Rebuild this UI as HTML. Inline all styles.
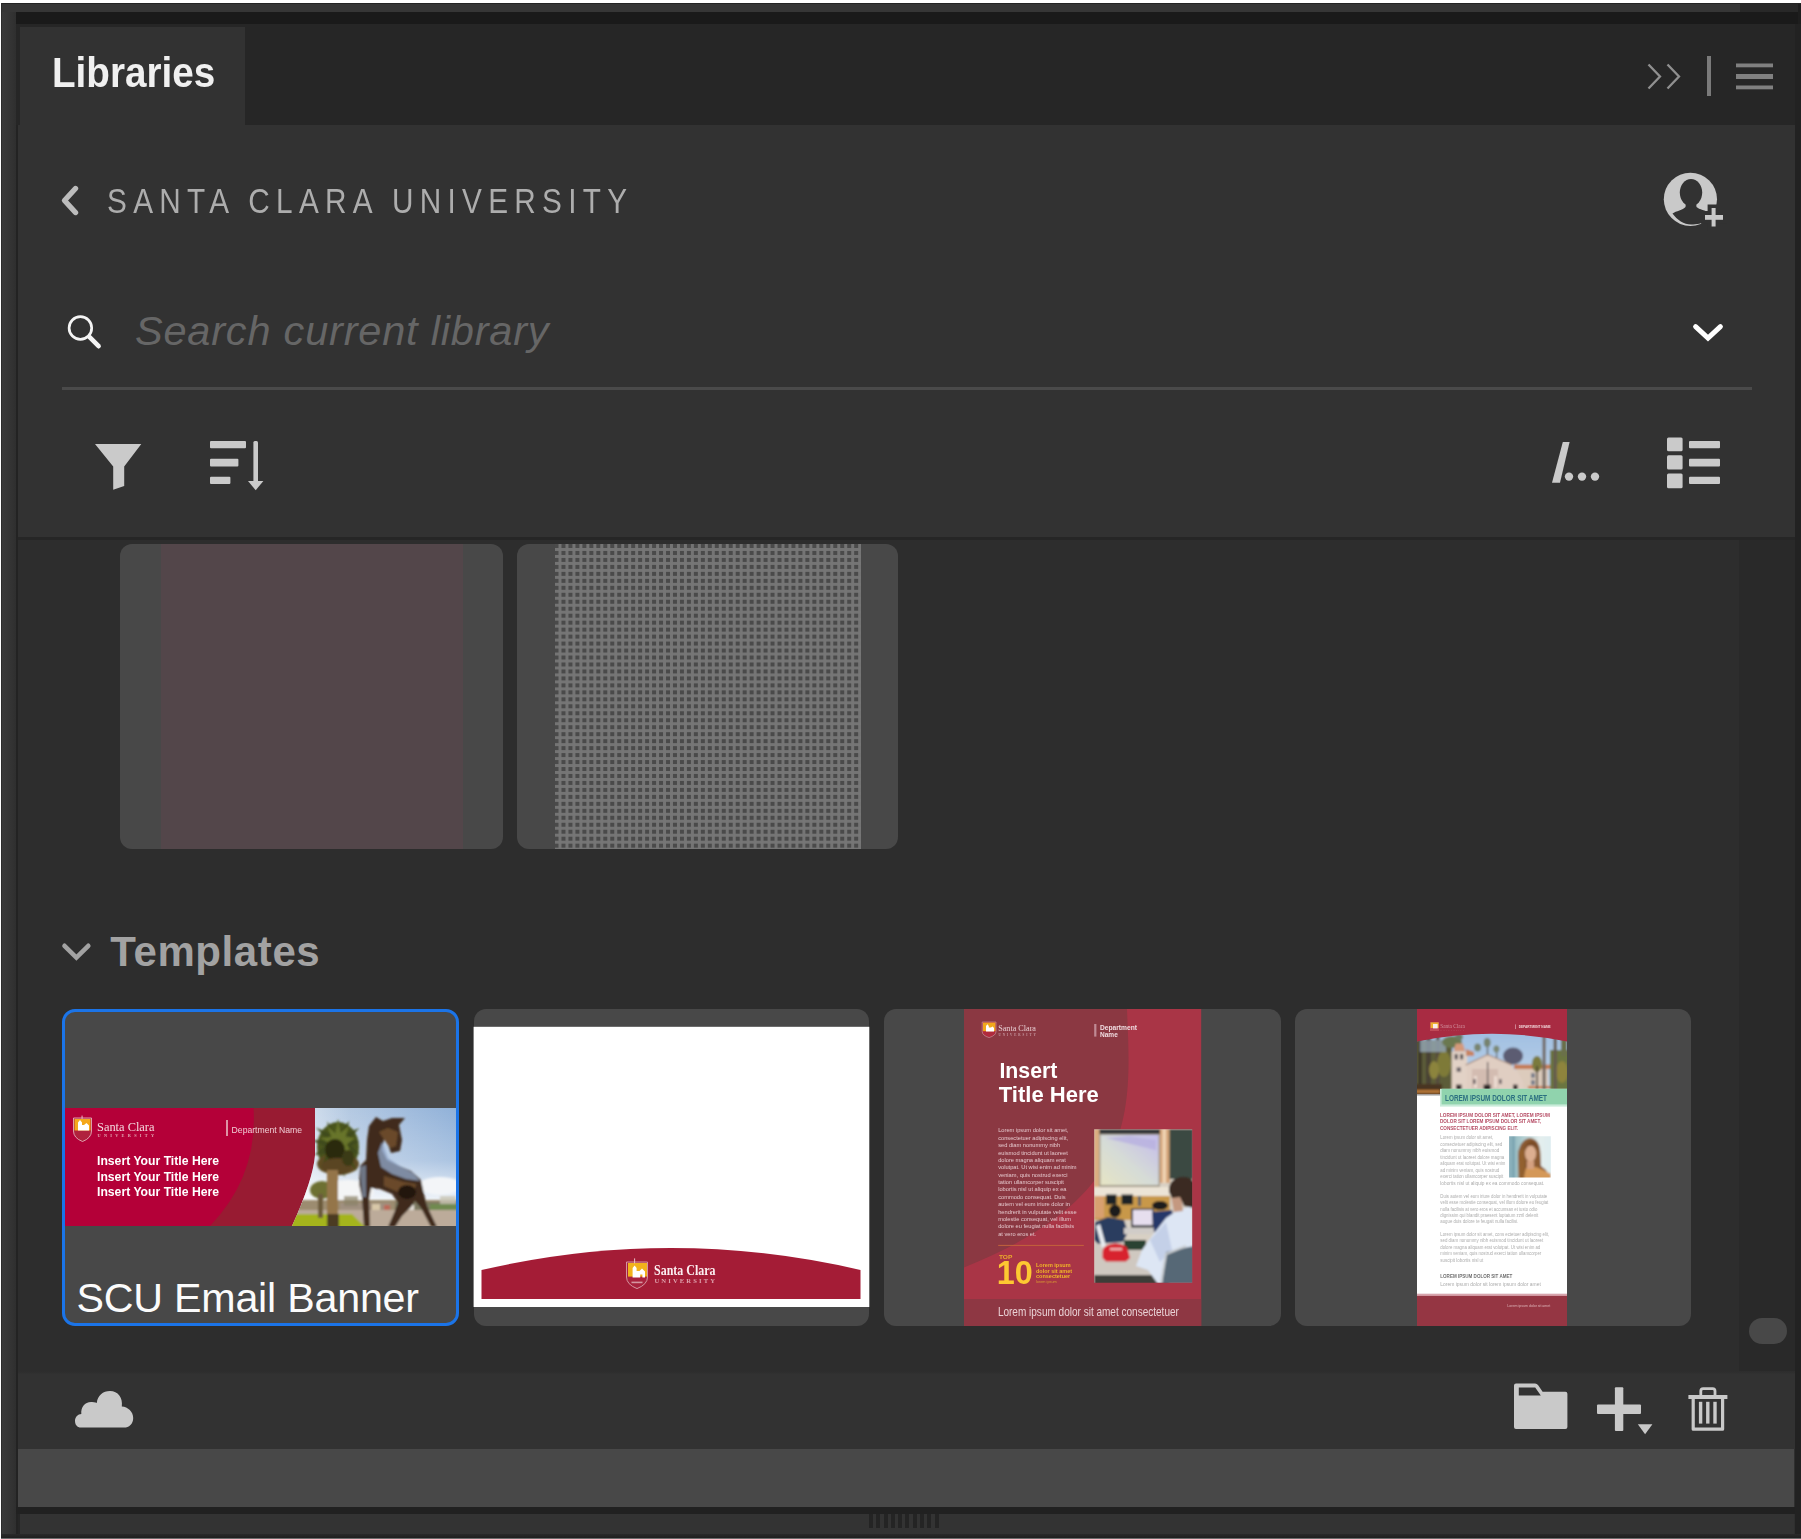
<!DOCTYPE html>
<html lang="en">
<head>
<meta charset="utf-8">
<title>Libraries</title>
<style>
html,body{margin:0;padding:0;}
body{width:1801px;height:1539px;position:relative;overflow:hidden;background:#fff;font-family:"Liberation Sans",sans-serif;}
.a{position:absolute;}
.t{position:absolute;white-space:nowrap;line-height:1;}
svg{position:absolute;overflow:visible;}
/* chrome */
#frame{left:1px;top:3px;width:1800px;height:1535px;background:linear-gradient(90deg,#3a3a3a 0,#353535 8px,#2f2f2f 15px,#2f2f2f 100%);}
#topedge{left:1px;top:3px;width:1800px;height:1px;background:#242424;}
#leftedge{left:1px;top:3px;width:1px;height:1535px;background:#2c2c2c;}
#topstrip{left:2px;top:4px;width:1738px;height:8px;background:#363636;}
#topstrip2{left:1740px;top:4px;width:61px;height:8px;background:#282828;}
#blackbar{left:16px;top:12px;width:1782px;height:12px;background:#1a1a1a;}
#tabbar{left:16px;top:24px;width:1779px;height:101px;background:#262626;}
#tab{left:20px;top:27px;width:225px;height:98px;background:#323232;}
#panel{left:18px;top:125px;width:1777px;height:412px;background:#323232;}
#sep1{left:18px;top:537px;width:1777px;height:3.3px;background:#262626;}
#content{left:18px;top:540px;width:1721px;height:831px;background:#2d2d2d;}
#track{left:1739px;top:540px;width:56px;height:831px;background:#292929;}
#thumb{left:1749px;top:1318px;width:38px;height:26px;border-radius:13px;background:#484848;}
#footer{left:18px;top:1371px;width:1777px;height:78px;background:linear-gradient(#2d2d2d 0,#2f2f2f 2px,#323232 3px,#323232 100%);}
#band{left:18px;top:1449px;width:1776px;height:58px;background:#484848;}
#dark2{left:16px;top:1507px;width:1785px;height:7px;background:#212121;}
#low{left:20px;top:1514px;width:1774px;height:20px;background:#333;}
#lowl{left:16px;top:125px;width:2px;height:1413px;background:#232323;}
#lowl2{left:18px;top:1514px;width:2px;height:20px;background:#262626;}
#bot{left:1px;top:1534px;width:1800px;height:4px;background:linear-gradient(#2a2a2a,#1f1f1f);}
#botline{left:1px;top:1538px;width:1800px;height:1px;background:#6c6c6c;}
#rstrip{left:1795px;top:24px;width:6px;height:1514px;background:#222;}
#rstrip2{left:1798px;top:4px;width:3px;height:20px;background:#1e1e1e;}
#grip{left:869px;top:1514px;width:70.5px;height:14px;background:repeating-linear-gradient(90deg,#242424 0,#242424 4px,transparent 4px,transparent 7.28px);}

.card{position:absolute;background:#484848;border-radius:12px;overflow:hidden;}
#cA{left:120px;top:544px;width:383px;height:305px;}
#cA i{position:absolute;left:41px;top:0;width:302px;height:305px;background:#53464a;}
#cB{left:517px;top:544px;width:381px;height:305px;}
#cB i{position:absolute;left:38px;top:0;width:306px;height:305px;background-color:#4a4a4a;
 background-image:linear-gradient(90deg,rgba(118,118,118,.95) 0,rgba(118,118,118,.95) 2.6px,transparent 2.6px),linear-gradient(180deg,rgba(118,118,118,.95) 0,rgba(118,118,118,.95) 2.6px,transparent 2.6px);
 background-size:6.97px 6.97px;background-position:3.5px 4px;}
#c1{left:62px;top:1009px;width:391px;height:311px;border:3px solid #1b74e8;border-radius:13px;}
#c2{left:474px;top:1009px;width:395px;height:317px;}
#c3{left:884px;top:1009px;width:397px;height:317px;}
#c4{left:1295px;top:1009px;width:396px;height:317px;}
</style>
</head>
<body>
<div class="a" id="frame"></div>
<div class="a" id="topstrip"></div>
<div class="a" id="topstrip2"></div>
<div class="a" id="topedge"></div>
<div class="a" id="leftedge"></div>
<div class="a" id="rstrip2"></div>
<div class="a" id="blackbar"></div>
<div class="a" id="tabbar"></div>
<div class="a" id="tab"></div>
<div class="a" id="panel"></div>
<div class="a" id="sep1"></div>
<div class="a" id="content"></div>
<div class="a" id="track"></div>
<div class="a" id="thumb"></div>
<div class="a" id="footer"></div>
<div class="a" id="band"></div>
<div class="a" id="lowl"></div>
<div class="a" id="dark2"></div>
<div class="a" id="low"></div>
<div class="a" id="lowl2"></div>
<div class="a" id="rstrip"></div>
<div class="a" id="bot"></div>
<div class="a" id="botline"></div>
<div class="a" id="grip"></div>

<!-- TEXT -->
<div class="t" id="tLib" style="left:52px;top:52px;font-size:42px;font-weight:bold;color:#f0f0f0;transform-origin:0 0;transform:scaleX(.92);">Libraries</div>
<div class="t" id="tScu" style="left:106.5px;top:183px;font-size:35px;color:#adadad;letter-spacing:7.4px;transform-origin:0 0;transform:scaleX(.85);">SANTA CLARA UNIVERSITY</div>
<div class="t" id="tSearch" style="left:135px;top:310px;font-size:41.5px;font-style:italic;color:#666666;letter-spacing:.8px;">Search current library</div>
<div class="t" id="tTpl" style="left:110.3px;top:931.3px;font-size:42px;font-weight:bold;color:#a2a2a2;letter-spacing:.6px;">Templates</div>

<svg id="icons" width="1801" height="1539" viewBox="0 0 1801 1539" style="left:0;top:0;">
<!-- collapse chevrons + divider + hamburger -->
<g fill="none" stroke="#909090" stroke-width="2.3" stroke-linejoin="miter">
<polyline points="1648.5,64.5 1660,76.5 1648.5,88.5"/>
<polyline points="1667.5,64.5 1679,76.5 1667.5,88.5"/>
</g>
<rect x="1707" y="56" width="4" height="40" fill="#7a7a7a"/>
<g fill="#808080">
<rect x="1736" y="63.5" width="37" height="3.8"/>
<rect x="1736" y="74" width="37" height="5"/>
<rect x="1736" y="85.5" width="37" height="3.8"/>
</g>
<!-- back chevron -->
<polyline points="75.5,188.5 64.5,200.5 75.5,212.5" fill="none" stroke="#bcbcbc" stroke-width="5.4" stroke-linecap="round" stroke-linejoin="round"/>
<!-- invite user -->
<g>
<circle cx="1690.4" cy="199.3" r="26.6" fill="#c9c9c9"/>
<ellipse cx="1691" cy="192.6" rx="11.2" ry="13.6" fill="#323232"/>
<path d="M1686 202 L1696 202 L1696.5 207 C1699 209.5 1706 210.5 1709 212.5 L1707 219 C1702 224 1697 224.5 1691 224.5 C1684 224.5 1677 220 1672.5 213.5 C1676 211 1683 210 1685.5 207 Z" fill="#323232"/>
<path d="M1707.6 204.4 L1719.2 204.4 L1719.2 211 L1727 211 L1727 223.8 L1719.2 223.8 L1719.2 231 L1707.6 231 L1707.6 223.8 L1701 223.8 L1701 211 L1707.6 211 Z" fill="#323232"/>
<rect x="1705" y="215" width="18" height="4.8" fill="#c9c9c9"/>
<rect x="1711.6" y="208" width="4" height="18.5" fill="#c9c9c9"/>
</g>
<!-- search icon -->
<g fill="none" stroke="#f4f4f4">
<circle cx="80.4" cy="328" r="11.3" stroke-width="2.7"/>
<line x1="89.6" y1="337.2" x2="98.6" y2="346.2" stroke-width="4.6" stroke-linecap="round"/>
</g>
<!-- dropdown chevron -->
<polyline points="1695.6,326.6 1708,338 1720.4,326.6" fill="none" stroke="#ffffff" stroke-width="5" stroke-linecap="round" stroke-linejoin="miter"/>
<rect x="62" y="387" width="1690" height="3" fill="#4a4a4a"/>
<!-- filter funnel -->
<path d="M95 444 L141.3 444 L124.2 466.5 L124.2 486 L113.2 489.8 L113.2 466.5 Z" fill="#cacaca"/>
<!-- sort -->
<g fill="#cacaca">
<rect x="210" y="441" width="36" height="7.2" rx="1"/>
<rect x="210" y="458.8" width="28.4" height="7.8" rx="1"/>
<rect x="210" y="476.8" width="20.4" height="7.2" rx="1"/>
<rect x="253.4" y="441" width="4.6" height="42" rx="1.5"/>
<path d="M248 481 L263.4 481 L255.7 490.2 Z"/>
</g>
<!-- path breadcrumb /... -->
<g fill="#cacaca">
<path d="M1552 482.8 L1560 482.8 L1569.6 442 L1562.8 442 Z"/>
<circle cx="1569" cy="476.6" r="4.2"/>
<circle cx="1582" cy="476.6" r="4.2"/>
<circle cx="1595" cy="476.6" r="4.2"/>
</g>
<!-- list view -->
<g fill="#cacaca">
<rect x="1667" y="437.4" width="15.6" height="13.8" rx="1.5"/>
<rect x="1667" y="455.2" width="15.6" height="14.4" rx="1.5"/>
<rect x="1667" y="473.6" width="15.6" height="14.6" rx="1.5"/>
<rect x="1689" y="441" width="31" height="7.2" rx="1"/>
<rect x="1689" y="458.8" width="31" height="7.8" rx="1"/>
<rect x="1689" y="476.8" width="31" height="7.2" rx="1"/>
</g>
<!-- section chevron -->
<polyline points="64.5,945.8 76.4,957.6 88.3,945.8" fill="none" stroke="#a2a2a2" stroke-width="4.6" stroke-linecap="round" stroke-linejoin="miter"/>
<!-- cloud -->
<path d="M81 1427.6 C77 1427.6 75 1424.5 75 1421 C75 1417 78 1414.2 81.3 1414 C80.8 1407 85 1401.5 92 1402 C95 1402 96.5 1402.8 96.8 1403 C97.5 1395.5 103 1391 110 1391 C118 1391 123 1397.5 121.8 1406.5 C128 1407 133.2 1411.5 133.2 1418 C133.2 1424 129 1427.6 124 1427.6 Z" fill="#c9c9c9"/>
<!-- folder -->
<path d="M1514 1385.5 Q1514 1383.5 1516 1383.5 L1535 1383.5 Q1537 1383.5 1538.2 1385.2 L1542.6 1391.7 L1565.4 1391.7 Q1567.4 1391.7 1567.4 1393.7 L1567.4 1427 Q1567.4 1429 1565.4 1429 L1516 1429 Q1514 1429 1514 1427 Z M1518.8 1387.4 L1518.8 1395.4 L1540.8 1395.4 L1535.2 1387.4 Z" fill="#c9c9c9" fill-rule="evenodd"/>
<!-- plus -->
<g fill="#c9c9c9">
<rect x="1597" y="1404.6" width="44" height="9.4" rx="1"/>
<rect x="1614.9" y="1387.3" width="8.4" height="43.8" rx="1"/>
<path d="M1637.8 1424.2 L1652.4 1424.2 L1645.1 1434.2 Z"/>
</g>
<!-- trash -->
<g fill="none" stroke="#c9c9c9">
<path d="M1700.8 1395.5 L1700.8 1391 Q1700.8 1388.6 1703.2 1388.6 L1712.6 1388.6 Q1715 1388.6 1715 1391 L1715 1395.5" stroke-width="2.8"/>
<line x1="1688.4" y1="1397" x2="1727.4" y2="1397" stroke-width="4"/>
<path d="M1693.2 1399 L1693.2 1429.2 L1722.6 1429.2 L1722.6 1399" stroke-width="3.2" stroke-linejoin="round"/>
<line x1="1700.6" y1="1401.8" x2="1700.6" y2="1423.6" stroke-width="3.4"/>
<line x1="1707.8" y1="1401.8" x2="1707.8" y2="1423.6" stroke-width="3.4"/>
<line x1="1715" y1="1401.8" x2="1715" y2="1423.6" stroke-width="3.4"/>
</g>
</svg>
<!--ICONS-->
<div class="card" id="cA"><i></i></div>
<div class="card" id="cB"><i></i></div>
<div class="card" id="c1"></div>
<div class="card" id="c2"></div>
<div class="card" id="c3"></div>
<div class="card" id="c4"></div>
<svg id="s1" width="1801" height="1539" viewBox="0 0 1801 1539" style="left:0;top:0;">
<defs>
<clipPath id="cpBanner"><rect x="65" y="1108" width="391" height="118"/></clipPath>
<clipPath id="cpPhoto1"><path d="M315 1108 L456 1108 L456 1226 L292 1226 Q313 1180 315 1155 Z"/></clipPath>
<linearGradient id="sky1" x1="0" y1="0" x2="1" y2="0"><stop offset="0" stop-color="#dfe8f2"/><stop offset=".35" stop-color="#b4c9e2"/><stop offset="1" stop-color="#8fb0d8"/></linearGradient>
<linearGradient id="haze1" x1="0" y1="0" x2="0" y2="1"><stop offset="0" stop-color="#fff" stop-opacity="0"/><stop offset=".55" stop-color="#fff" stop-opacity=".25"/><stop offset="1" stop-color="#fff" stop-opacity=".9"/></linearGradient>
<filter id="b1" x="-10%" y="-10%" width="120%" height="120%"><feGaussianBlur stdDeviation="1.1"/></filter>
<filter id="b05" x="-10%" y="-10%" width="120%" height="120%"><feGaussianBlur stdDeviation="0.55"/></filter>
</defs>
<g clip-path="url(#cpBanner)">
<rect x="65" y="1108" width="391" height="118" fill="#b40038"/>
<path d="M253.5 1108 Q258 1176 210 1226 L330 1226 L330 1108 Z" fill="#981b32"/>
<g clip-path="url(#cpPhoto1)">
<rect x="290" y="1108" width="170" height="118" fill="url(#sky1)"/>
<rect x="290" y="1108" width="170" height="96" fill="url(#haze1)"/>
<g filter="url(#b1)">
<ellipse cx="440" cy="1186" rx="22" ry="9" fill="#f3f5f8"/>
<ellipse cx="348" cy="1192" rx="26" ry="12" fill="#f4f5f6"/>
<rect x="290" y="1200" width="170" height="10" fill="#9c8c70"/>
<rect x="395" y="1202" width="62" height="9" fill="#7d7a62"/>
<rect x="430" y="1204" width="28" height="7" fill="#6f8a50"/>
<rect x="340" y="1203" width="50" height="8" fill="#a09080"/>
<rect x="290" y="1210" width="170" height="18" fill="#bcab9a"/>
<rect x="372" y="1204" width="8" height="6" fill="#d8c8a8"/>
<rect x="384" y="1205" width="6" height="5" fill="#c85848" opacity=".7"/>
<rect x="404" y="1205" width="10" height="5" fill="#e4e0d8"/>
<rect x="440" y="1196" width="16" height="8" fill="#c8c4b4" opacity=".8"/>
<rect x="344" y="1196" width="14" height="10" fill="#8a8268" opacity=".7"/>
<path d="M290 1214 L352 1214 L366 1228 L290 1228 Z" fill="#a4b41c"/>
<!-- small palm behind -->
<ellipse cx="322" cy="1190" rx="12" ry="9" fill="#6d7030"/>
<rect x="318" y="1194" width="5" height="24" fill="#6b5a3a"/>
<!-- main palm -->
<ellipse cx="338" cy="1147" rx="21" ry="25" fill="#4a541c"/>
<ellipse cx="338" cy="1164" rx="21" ry="11" fill="#5e4c22"/>
<polygon points="338.0,1119.1 341.0,1130.7 349.2,1121.0 346.5,1133.6 359.4,1128.1 348.2,1139.8 359.2,1141.2 351.7,1146.1 359.7,1154.2 347.5,1152.1 357.0,1170.7 343.8,1157.6 344.6,1177.2 338.0,1159.4 331.8,1175.4 332.8,1156.3 320.8,1168.2 326.6,1153.8 314.5,1155.1 324.7,1146.0 311.9,1140.6 327.8,1139.8 315.8,1127.5 329.5,1133.6 327.1,1121.5 335.4,1132.7" fill="#414c1a"/>
<polygon points="338.0,1119.8 340.7,1132.7 349.0,1125.7 345.7,1136.4 354.8,1138.3 346.9,1144.2 351.4,1153.1 343.6,1151.6 343.4,1163.3 338.0,1155.0 331.9,1166.1 333.5,1149.7 325.7,1152.2 330.8,1143.8 320.0,1138.0 331.2,1137.1 327.3,1126.1 335.4,1133.2" fill="#68742a"/>
<ellipse cx="335" cy="1150" rx="10" ry="11" fill="#2a2a10"/>
<ellipse cx="337" cy="1166" rx="15" ry="8" fill="#5a4420"/>
<ellipse cx="348" cy="1158" rx="6" ry="8" fill="#3a3a14"/>
<rect x="327" y="1170" width="11" height="58" fill="#94744a"/>
<rect x="327" y="1214" width="12" height="14" fill="#4b3a24"/>
<!-- horse -->
<path d="M376 1117 L383 1121 L392 1118 L405 1118 L399 1125 L402 1140 L400 1151 L391 1153 L388 1144 L384 1139 L382 1150 L387 1160 L399 1166 L411 1171 L421 1180 L424 1194 L427 1206 L437 1227 L431 1227 L421 1208 L415 1201 L411 1207 L402 1216 L395 1227 L388 1227 L394 1213 L398 1203 L392 1194 L380 1189 L371 1188 L369 1200 L370 1227 L364 1227 L362 1198 L359 1184 L360 1166 L366 1160 L367 1140 L369 1126 Z" fill="#3f2c1d"/>
<path d="M379 1132 L388 1128 L398 1132 L396 1146 L390 1148 Z" fill="#6b4a2c"/>
<path d="M382 1142 L388 1158 L400 1166 L413 1173 L420 1181 L406 1179 L392 1174 L381 1167 L378 1153 Z" fill="#8ea4c4" opacity=".8"/>
<path d="M384 1176 L404 1182 L416 1184 L414 1194 L398 1192 L384 1186 Z" fill="#6a4a2a"/>
<ellipse cx="407" cy="1192" rx="9" ry="7" fill="#20140e"/>
<path d="M360 1167 L366 1165 L366 1197 L362 1197 Z" fill="#7f8fa8" opacity=".75"/>
</g>
</g>
<!-- shield logo -->
<g filter="url(#b05)">
<path d="M73.5 1118 L91.5 1118 L91.5 1131 Q91.5 1138 82.5 1141.5 Q73.5 1138 73.5 1131 Z" fill="#b0203c" stroke="#e7c4c8" stroke-width=".8"/>
<path d="M74.5 1119 L90.5 1119 L90.5 1130.5 L74.5 1130.5 Z" fill="#f4a81c"/>
<path d="M78 1130.5 L78 1122.5 L80 1120 L82 1122.5 L82 1125 L84 1125 L86.5 1123 L89 1125.5 L89 1130.5 Z" fill="#fff"/>
<rect x="81.6" y="1115.6" width=".9" height="3.2" fill="#f0d0d4"/>
</g>
</g>
<g font-family="'Liberation Serif',serif" fill="#f4dfe3" filter="url(#b05)">
<text x="97" y="1131" font-size="12.4" textLength="57.5" lengthAdjust="spacingAndGlyphs" fill="#f3d8dd">Santa Clara</text>
<text x="97.5" y="1136.8" font-size="4.3" textLength="56.5" lengthAdjust="spacing" fill="#e3a9b4" font-weight="bold">UNIVERSITY</text>
</g>
<rect x="226.2" y="1120" width="1.6" height="16" fill="#e9b7c0"/>
<g font-family="'Liberation Sans',sans-serif" filter="url(#b05)">
<text x="231.6" y="1132.6" font-size="9.4" textLength="70.5" lengthAdjust="spacingAndGlyphs" fill="#f0cdd4">Department Name</text>
<g font-weight="bold" font-size="13" fill="#fff">
<text x="97" y="1165.2" textLength="122" lengthAdjust="spacingAndGlyphs">Insert Your Title Here</text>
<text x="97" y="1180.6" textLength="122" lengthAdjust="spacingAndGlyphs">Insert Your Title Here</text>
<text x="97" y="1196" textLength="122" lengthAdjust="spacingAndGlyphs">Insert Your Title Here</text>
</g>
</g>
</svg>
<div class="t" id="tBan" style="left:76.4px;top:1277.6px;font-size:41.2px;color:#fbfbfb;letter-spacing:-.2px;">SCU Email Banner</div>

<svg id="s2" width="1801" height="1539" viewBox="0 0 1801 1539" style="left:0;top:0;">
<rect x="473.6" y="1026.8" width="395.7" height="280.2" fill="#ffffff"/>
<path d="M481.5 1299 L481.5 1270 Q671 1226 860.5 1270 L860.5 1299 Z" fill="#a41c36"/>
<g filter="url(#b05)">
<path d="M626.5 1262 L647.5 1262 L647.5 1277 Q647.5 1284.5 637 1288.6 Q626.5 1284.5 626.5 1277 Z" fill="#a8243c" stroke="#d9a0aa" stroke-width=".9"/>
<rect x="628" y="1263" width="19" height="13.6" fill="#f2b21c"/>
<path d="M632.6 1277.6 L632.6 1268 L634.6 1265.4 L636.6 1268 L636.6 1271 L639.5 1271 L642 1268.6 L645 1271.4 L645 1277.6 L642.4 1277.6 L642.4 1274.5 L640.2 1274.5 L640.2 1277.6 Z" fill="#fff"/>
<rect x="634.1" y="1258.4" width="1" height="5" fill="#e8c0c6"/>
<rect x="631.5" y="1281.6" width="11" height="1.6" fill="#d595a1"/>
</g>
<g font-family="'Liberation Serif',serif" filter="url(#b05)">
<text x="654" y="1274.8" font-size="14.2" font-weight="bold" textLength="61.5" lengthAdjust="spacingAndGlyphs" fill="#fbeef0">Santa Clara</text>
<text x="654.4" y="1282.9" font-size="6.6" font-weight="bold" textLength="60.6" lengthAdjust="spacing" fill="#dfa2ad">UNIVERSITY</text>
</g>
</svg>

<svg id="s3" width="1801" height="1539" viewBox="0 0 1801 1539" style="left:0;top:0;">
<defs>
<clipPath id="cpP3"><rect x="964" y="1009" width="237.2" height="317"/></clipPath>
<clipPath id="cpPh3"><rect x="1094.2" y="1129.2" width="98" height="153.6"/></clipPath>
<linearGradient id="scr3" x1="0" y1="1" x2="1" y2="0"><stop offset="0" stop-color="#e6e4c4"/><stop offset=".45" stop-color="#d6dcd6"/><stop offset="1" stop-color="#c4bcec"/></linearGradient>
</defs>
<g clip-path="url(#cpP3)">
<rect x="964" y="1009" width="238" height="317" fill="#a93546"/>
<path d="M964 1009 L1127 1009 C1131 1110 1140 1197 964 1267.4 Z" fill="#8b3842"/>
<rect x="964" y="1299" width="238" height="27" fill="#8e3743"/>
</g>
<!-- photo -->
<g clip-path="url(#cpPh3)"><g filter="url(#b1)">
<rect x="1090" y="1125" width="106" height="162" fill="#d8d0c4"/>
<rect x="1094" y="1129" width="66" height="6" fill="#34383a"/>
<rect x="1094" y="1129" width="5.4" height="60" fill="#dcae80"/>
<rect x="1099" y="1134" width="61" height="53" fill="#a49c8c"/>
<rect x="1100.5" y="1135" width="58" height="50" fill="url(#scr3)"/>
<path d="M1106 1138 L1156 1150 L1156 1140 L1130 1136 Z" fill="#b8b0e0" opacity=".8"/>
<rect x="1160" y="1129" width="10" height="54" fill="#d4a478"/>
<rect x="1162.5" y="1129" width="3.5" height="54" fill="#f0d4b4"/>
<rect x="1169.5" y="1129" width="24" height="50" fill="#3a4a42"/>
<rect x="1094" y="1187" width="76" height="9" fill="#ece4d6"/>
<rect x="1094" y="1196" width="76" height="24" fill="#c8984a"/>
<rect x="1106" y="1194.5" width="10.5" height="10" fill="#1e2428"/>
<rect x="1121.5" y="1194.5" width="11.5" height="10" fill="#1e2428"/>
<rect x="1138" y="1196" width="3" height="10" fill="#5a6068"/>
<rect x="1094" y="1196" width="10" height="22" fill="#d8a070"/>
<!-- center person -->
<ellipse cx="1115" cy="1211" rx="6" ry="6.5" fill="#1c1a1c"/>
<path d="M1095 1222 L1108 1217 L1124 1220 L1128 1232 L1122 1244 L1100 1246 L1094 1240 Z" fill="#2b3c5e"/>
<!-- laptop -->
<rect x="1131" y="1208.5" width="23" height="19" fill="#3a3c44"/>
<rect x="1133" y="1210" width="19.5" height="15" fill="#e6deee"/>
<rect x="1124" y="1228" width="34" height="6" fill="#d0ccc8"/>
<!-- 2nd person -->
<ellipse cx="1160" cy="1205.5" rx="8" ry="4.5" fill="#1e1a1a"/>
<path d="M1152 1212 L1172 1210 L1176 1230 L1154 1232 Z" fill="#26386a"/>
<!-- table -->
<path d="M1094 1244 L1150 1240 L1165 1252 L1165 1276 L1094 1276 Z" fill="#cfc8c0"/>
<rect x="1094" y="1275" width="75" height="10" fill="#3c3c38"/>
<rect x="1124" y="1240" width="22" height="10" fill="#2a4232"/>
<path d="M1096 1226 L1100 1224 L1106 1246 L1102 1248 Z" fill="#e8ecf0"/>
<!-- red cap -->
<path d="M1102.5 1252 Q1103 1244 1116 1243.5 Q1128 1244 1128.5 1252 L1130 1258 L1126 1261.5 L1106 1261.5 L1102.5 1258 Z" fill="#d8202e"/>
<rect x="1110" y="1248" width="12" height="2.4" fill="#f0b0b0"/>
<!-- foreground person -->
<path d="M1192 1206 L1178 1210 L1166 1218 L1152 1236 L1142 1250 L1136 1266 L1148 1270 L1158 1284 L1194 1284 Z" fill="#dde6f4"/>
<path d="M1150 1240 L1166 1222 L1172 1250 L1160 1262 Z" fill="#c4d0e8"/>
<path d="M1171 1196 L1181 1196 L1183 1211 L1174 1212 Z" fill="#c49880"/>
<path d="M1169 1192 Q1168 1180 1180 1177 Q1190 1176 1194 1182 L1194 1208 L1184 1206 L1180 1197 L1172 1198 Z" fill="#3a2a22"/>
<!-- chair -->
<path d="M1166 1252 L1194 1246 L1194 1284 L1162 1284 Z" fill="#566876"/>
<path d="M1161 1284 L1166 1254 L1186 1246" fill="none" stroke="#c8ccd0" stroke-width="2.2"/>
</g></g>
<!-- logo -->
<g filter="url(#b05)">
<path d="M982.2 1022 L996 1022 L996 1031.5 Q996 1035.5 989.1 1037.6 Q982.2 1035.5 982.2 1031.5 Z" fill="#b02a3e" stroke="#caa0a4" stroke-width=".6"/>
<rect x="983" y="1022.6" width="12.4" height="8.6" fill="#f0a81c"/>
<path d="M986 1031.4 L986 1026 L987.4 1024.2 L988.8 1026 L988.8 1027.6 L991 1027.6 L992.6 1026.4 L994 1028 L994 1031.4 Z" fill="#fff"/>
<text x="998.2" y="1031.3" font-family="'Liberation Serif',serif" font-size="8.7" textLength="37.8" lengthAdjust="spacingAndGlyphs" fill="#e6ccd0">Santa Clara</text>
<text x="998.4" y="1035.5" font-family="'Liberation Serif',serif" font-size="3.2" font-weight="bold" textLength="37.4" lengthAdjust="spacing" fill="#c89aa2">UNIVERSITY</text>
<rect x="1094.2" y="1024" width="2.2" height="12.6" fill="#c08a94"/>
<g font-family="'Liberation Sans',sans-serif" font-weight="bold" font-size="6.4" fill="#f0dce0">
<text x="1100" y="1029.8" textLength="37" lengthAdjust="spacingAndGlyphs">Department</text>
<text x="1100" y="1037" textLength="17.8" lengthAdjust="spacingAndGlyphs">Name</text>
</g>
</g>
<g font-family="'Liberation Sans',sans-serif" font-weight="bold" font-size="22.4" fill="#ffffff" filter="url(#b05)">
<text x="999.4" y="1077.5" textLength="58" lengthAdjust="spacingAndGlyphs">Insert</text>
<text x="998.8" y="1101.8" textLength="100" lengthAdjust="spacingAndGlyphs">Title Here</text>
</g>
<g font-family="'Liberation Sans',sans-serif" font-size="5.7" fill="#e3c5ca" filter="url(#b05)">
<text x="998.2" y="1132.40">Lorem ipsum dolor sit amet,</text>
<text x="998.2" y="1139.79">consectetuer adipiscing elit,</text>
<text x="998.2" y="1147.17">sed diam nonummy nibh</text>
<text x="998.2" y="1154.56">euismod tincidunt ut laoreet</text>
<text x="998.2" y="1161.94">dolore magna aliquam erat</text>
<text x="998.2" y="1169.33">volutpat. Ut wisi enim ad minim</text>
<text x="998.2" y="1176.71">veniam, quis nostrud exerci</text>
<text x="998.2" y="1184.10">tation ullamcorper suscipit</text>
<text x="998.2" y="1191.48">lobortis nisl ut aliquip ex ea</text>
<text x="998.2" y="1198.87">commodo consequat. Duis</text>
<text x="998.2" y="1206.25">autem vel eum iriure dolor in</text>
<text x="998.2" y="1213.63">hendrerit in vulputate velit esse</text>
<text x="998.2" y="1221.02">molestie consequat, vel illum</text>
<text x="998.2" y="1228.41">dolore eu feugiat nulla facilisis</text>
<text x="998.2" y="1235.79">at vero eros et.</text>
</g>
<rect x="998.2" y="1244.9" width="85.6" height=".9" fill="#c7683a"/>
<g font-family="'Liberation Sans',sans-serif" font-weight="bold" filter="url(#b05)">
<text x="998.9" y="1258.6" font-size="5.8" textLength="13.4" lengthAdjust="spacingAndGlyphs" fill="#eaa82c">TOP</text>
<text x="996.8" y="1284.2" font-size="33.9" textLength="36" lengthAdjust="spacingAndGlyphs" fill="#fdc830">10</text>
<g font-size="5.5" fill="#f0b428">
<text x="1036" y="1267">Lorem ipsum</text>
<text x="1036" y="1272.9">dolor sit amet</text>
<text x="1036" y="1278.4">consectetuer</text>
<text x="1036" y="1283.2" font-size="3.8" font-weight="normal" fill="#d89a30">lorem ipsum</text>
</g>
</g>
<text x="997.9" y="1316.2" font-family="'Liberation Sans',sans-serif" font-size="12.8" textLength="181" lengthAdjust="spacingAndGlyphs" fill="#ead2d6" filter="url(#b05)">Lorem ipsum dolor sit amet consectetuer</text>
</svg>

<svg id="s4" width="1801" height="1539" viewBox="0 0 1801 1539" style="left:0;top:0;">
<defs>
<clipPath id="cpP4"><rect x="1416.9" y="1009" width="150.2" height="317"/></clipPath>
<clipPath id="cpPh4"><path d="M1416.9 1041.5 Q1492 1026 1567.1 1041.5 L1567.1 1094.4 L1416.9 1094.4 Z"/></clipPath>
<clipPath id="cpPt4"><rect x="1509.1" y="1136.3" width="41.7" height="41.3"/></clipPath>
<linearGradient id="sky4" x1="0" y1="0" x2="0" y2="1"><stop offset="0" stop-color="#9cbce0"/><stop offset="1" stop-color="#c4d8ec"/></linearGradient>
<linearGradient id="pbg4" x1="0" y1="0" x2="1" y2="0"><stop offset="0" stop-color="#7fa8b4"/><stop offset=".3" stop-color="#a8c8cc"/><stop offset=".7" stop-color="#e4eeee"/><stop offset="1" stop-color="#dcecf0"/></linearGradient>
<filter id="b08" x="-10%" y="-10%" width="120%" height="120%"><feGaussianBlur stdDeviation="0.8"/></filter>
<filter id="b03" x="-10%" y="-10%" width="120%" height="120%"><feGaussianBlur stdDeviation="0.35"/></filter>
</defs>
<g clip-path="url(#cpP4)">
<rect x="1416" y="1009" width="152" height="317" fill="#ffffff"/>
<rect x="1416" y="1009" width="152" height="36" fill="#a82b42"/>
<rect x="1416" y="1293.9" width="152" height="33" fill="#953643"/>
<rect x="1416" y="1293.9" width="152" height="2" fill="#d8a4ac"/>
<!-- campus photo -->
<g clip-path="url(#cpPh4)"><g filter="url(#b08)">
<rect x="1412" y="1025" width="160" height="72" fill="url(#sky4)"/>
<!-- left trees -->
<rect x="1412" y="1040" width="40" height="56" fill="#5c5c38"/>
<rect x="1418" y="1038" width="4" height="56" fill="#3e382c"/>
<rect x="1426" y="1036" width="5" height="58" fill="#4a4234"/>
<rect x="1436" y="1036" width="3.5" height="58" fill="#564c3c"/>
<ellipse cx="1444" cy="1064" rx="7" ry="13" fill="#7e7a38"/>
<ellipse cx="1434" cy="1070" rx="5" ry="9" fill="#8c843c"/>
<rect x="1420" y="1040" width="26" height="12" fill="#9cb4c8" opacity=".7"/>
<ellipse cx="1452" cy="1042" rx="10" ry="6" fill="#6a7850"/>
<rect x="1412" y="1084" width="30" height="12" fill="#4a3420"/>
<rect x="1412" y="1090" width="28" height="3" fill="#b87838"/>
<!-- right building + trees -->
<rect x="1516" y="1068" width="32" height="22" fill="#dccbbc"/>
<rect x="1514" y="1064.6" width="36" height="4.4" fill="#c47c54"/>
<rect x="1528" y="1086" width="24" height="2.6" fill="#c47c54"/>
<rect x="1531" y="1073" width="4" height="5" fill="#7a808c"/>
<rect x="1531" y="1080" width="4" height="5" fill="#7a808c"/>
<ellipse cx="1513" cy="1056" rx="10" ry="8.5" fill="#5c5c72"/>
<ellipse cx="1537" cy="1064" rx="5" ry="8" fill="#7a7a3c"/>
<rect x="1536.4" y="1066" width="1.6" height="26" fill="#4a4030"/>
<rect x="1550" y="1050" width="20" height="46" fill="#6a7440"/>
<ellipse cx="1562" cy="1072" rx="6" ry="11" fill="#8e843e"/>
<rect x="1542.6" y="1030" width="3" height="64" fill="#6e645c"/>
<rect x="1553.6" y="1030" width="3.2" height="64" fill="#645a50"/>
<rect x="1561" y="1034" width="6" height="22" fill="#6a7048"/>
<!-- small palms above church -->
<rect x="1486.8" y="1040" width="1.4" height="16" fill="#5a5a54"/>
<rect x="1496" y="1046" width="1.2" height="12" fill="#5a5a54"/>
<ellipse cx="1477.6" cy="1047.6" rx="3.4" ry="4" fill="#788470"/>
<ellipse cx="1487.2" cy="1042.6" rx="3.4" ry="4.6" fill="#76826e"/>
<ellipse cx="1496.4" cy="1049" rx="3" ry="3.6" fill="#7c8874"/>
<ellipse cx="1459" cy="1037" rx="4" ry="3" fill="#6a7a60"/>
<!-- tower -->
<path d="M1453.6 1051.6 L1455.6 1043.4 L1463 1043.4 L1465.4 1051.6 Z" fill="#d49a7a"/>
<rect x="1451.6" y="1051.6" width="15.6" height="44" fill="#e2d2c6"/>
<rect x="1454.6" y="1054" width="3.2" height="5.4" fill="#5a5458"/>
<rect x="1460" y="1054" width="3.2" height="5.4" fill="#5a5458"/>
<rect x="1456.6" y="1067.4" width="4.4" height="4.4" fill="#6a6468"/>
<rect x="1456" y="1084.6" width="5.6" height="6" fill="#3c3230"/>
<path d="M1466 1049 L1474 1052 L1474 1056 L1466 1056 Z" fill="#c88462"/>
<!-- church -->
<path d="M1466.6 1064.6 L1487.6 1055 L1511.4 1064.6 L1513 1068 L1518 1072 L1523.4 1082 L1523.4 1096 L1466.6 1096 Z" fill="#e0cec2"/>
<path d="M1465.6 1065 L1487.6 1054.6 L1512 1065" fill="none" stroke="#a08474" stroke-width="1.1"/>
<rect x="1472" y="1069" width="26" height="20" fill="#d0b8ac" opacity=".8"/>
<rect x="1474" y="1076" width="3" height="12" fill="#ecdcd2"/>
<rect x="1494" y="1076" width="3" height="12" fill="#ecdcd2"/>
<rect x="1487" y="1062" width="1.2" height="26" fill="#4a4448"/>
<rect x="1483.6" y="1084.6" width="7" height="10" fill="#2e2828"/>
<rect x="1473" y="1079" width="2.6" height="5" fill="#6a6064"/>
<rect x="1499" y="1079" width="2.6" height="5" fill="#6a6064"/>
<rect x="1513" y="1084.6" width="4.6" height="8" fill="#3c3434"/>
</g></g>
<!-- green band -->
<rect x="1440" y="1088.8" width="128" height="17.8" fill="#c9ebd9"/>
<rect x="1441.6" y="1088.8" width="126" height="15.6" fill="#90d3ad"/>
<rect x="1416.9" y="1094.4" width="23.1" height="1.4" fill="#8a8a8a" opacity=".55"/>
<!-- portrait -->
<g clip-path="url(#cpPt4)"><g filter="url(#b08)">
<rect x="1506" y="1133" width="48" height="48" fill="url(#pbg4)"/>
<rect x="1512" y="1133" width="3" height="48" fill="#6a98a8" opacity=".6"/>
<path d="M1519 1180 L1518 1156 Q1519 1140 1530 1138 Q1540 1139 1540.5 1154 L1541 1166 L1546 1170 L1551 1180 Z" fill="#8a5a30"/>
<path d="M1523 1180 L1526 1168 L1536 1167 L1543 1170 L1551 1174 L1551 1180 Z" fill="#d49858"/>
<ellipse cx="1530.6" cy="1153.6" rx="5.6" ry="8" fill="#dcae90"/>
<rect x="1527" y="1161" width="7" height="8" fill="#d4a080"/>
<path d="M1524 1150 Q1526 1141 1533 1141 Q1538 1143 1538 1150 Q1533 1144 1528 1146 Z" fill="#7a4c28"/>
<rect x="1518.6" y="1150" width="5.6" height="30" fill="#93602f"/>
</g></g>
</g>
<!-- header logo -->
<g filter="url(#b05)">
<rect x="1430" y="1022" width="9" height="9" fill="#c04858"/>
<rect x="1430.6" y="1022.4" width="8" height="5.6" fill="#eeb030"/>
<rect x="1433" y="1024" width="4.6" height="4.4" fill="#f8ece8"/>
<text x="1440.2" y="1028.3" font-family="'Liberation Serif',serif" font-size="5.8" textLength="24.6" lengthAdjust="spacingAndGlyphs" fill="#cf8f9c">Santa Clara</text>
<text x="1440.4" y="1031.4" font-family="'Liberation Serif',serif" font-size="2.2" textLength="24" lengthAdjust="spacing" fill="#b8586c">UNIVERSITY</text>
<rect x="1515" y="1024.4" width=".8" height="4.6" fill="#d898a4"/>
<text x="1518.7" y="1027.9" font-family="'Liberation Sans',sans-serif" font-weight="bold" font-size="4" textLength="32" lengthAdjust="spacingAndGlyphs" fill="#f0d4d8">DEPARTMENT NAME</text>
</g>
<g font-family="'Liberation Sans',sans-serif" font-weight="bold" filter="url(#b05)">
<text x="1445" y="1101.3" font-size="8.3" textLength="102" lengthAdjust="spacingAndGlyphs" fill="#2c6f80">LOREM IPSUM DOLOR SIT AMET</text>
<g font-size="5.6" fill="#a82c48" fill-opacity=".85">
<text x="1440" y="1116.9" textLength="109.8" lengthAdjust="spacingAndGlyphs">LOREM IPSUM DOLOR SIT AMET, LOREM IPSUM</text>
<text x="1440" y="1123.2" textLength="101" lengthAdjust="spacingAndGlyphs">DOLOR SIT LOREM IPSUM DOLOR SIT AMET,</text>
<text x="1440" y="1130" textLength="78.2" lengthAdjust="spacingAndGlyphs">CONSECTETUER ADIPISCING ELIT.</text>
</g>
<text x="1440.3" y="1278.3" font-size="4.8" textLength="72" lengthAdjust="spacingAndGlyphs" fill="#555" fill-opacity=".85">LOREM IPSUM DOLOR SIT AMET</text>
</g>
<g font-family="'Liberation Sans',sans-serif" font-size="4.7" fill="#9c9c9c" fill-opacity=".85" filter="url(#b05)">
<text x="1440.3" y="1139.40" textLength="53" lengthAdjust="spacingAndGlyphs">Lorem ipsum dolor sit amet,</text>
<text x="1440.3" y="1145.87" textLength="62" lengthAdjust="spacingAndGlyphs">consectetuer adipiscing elit, sed</text>
<text x="1440.3" y="1152.34" textLength="59" lengthAdjust="spacingAndGlyphs">diam nonummy nibh euismod</text>
<text x="1440.3" y="1158.81" textLength="64" lengthAdjust="spacingAndGlyphs">tincidunt ut laoreet dolore magna</text>
<text x="1440.3" y="1165.28" textLength="65" lengthAdjust="spacingAndGlyphs">aliquam erat volutpat. Ut wisi enim</text>
<text x="1440.3" y="1171.75" textLength="59" lengthAdjust="spacingAndGlyphs">ad minim veniam, quis nostrud</text>
<text x="1440.3" y="1178.22" textLength="63" lengthAdjust="spacingAndGlyphs">exerci tation ullamcorper suscipit</text>
<text x="1440.3" y="1184.69" textLength="104" lengthAdjust="spacingAndGlyphs">lobortis nisl ut aliquip ex ea commodo consequat.</text>
<text x="1440.3" y="1197.70" textLength="107" lengthAdjust="spacingAndGlyphs">Duis autem vel eum iriure dolor in hendrerit in vulputate</text>
<text x="1440.3" y="1204.10" textLength="108" lengthAdjust="spacingAndGlyphs">velit esse molestie consequat, vel illum dolore eu feugiat</text>
<text x="1440.3" y="1210.50" textLength="97" lengthAdjust="spacingAndGlyphs">nulla facilisis at vero eros et accumsan et iusto odio</text>
<text x="1440.3" y="1216.90" textLength="98" lengthAdjust="spacingAndGlyphs">dignissim qui blandit praesent luptatum zzril delenit</text>
<text x="1440.3" y="1223.30" textLength="78" lengthAdjust="spacingAndGlyphs">augue duis dolore te feugait nulla facilisi.</text>
<text x="1440.3" y="1236.00" textLength="109" lengthAdjust="spacingAndGlyphs">Lorem ipsum dolor sit amet, cons ectetuer adipiscing elit,</text>
<text x="1440.3" y="1242.48" textLength="103" lengthAdjust="spacingAndGlyphs">sed diam nonummy nibh euismod tincidunt ut laoreet</text>
<text x="1440.3" y="1248.96" textLength="100" lengthAdjust="spacingAndGlyphs">dolore magna aliquam erat volutpat. Ut wisi enim ad</text>
<text x="1440.3" y="1255.44" textLength="101" lengthAdjust="spacingAndGlyphs">minim veniam, quis nostrud exerci tation ullamcorper</text>
<text x="1440.3" y="1261.92" textLength="43" lengthAdjust="spacingAndGlyphs">suscipit lobortis nisl ut</text>
<text x="1440.3" y="1285.60" textLength="100.5" lengthAdjust="spacingAndGlyphs">Lorem ipsum dolor sit lorem ipsum dolor amet</text>
</g>
<text x="1507.3" y="1307.3" font-family="'Liberation Sans',sans-serif" font-size="3.6" textLength="43" lengthAdjust="spacingAndGlyphs" fill="#e8c8cc" fill-opacity=".8" filter="url(#b03)">Lorem ipsum dolor sit amet</text>
</svg>


</body>
</html>
